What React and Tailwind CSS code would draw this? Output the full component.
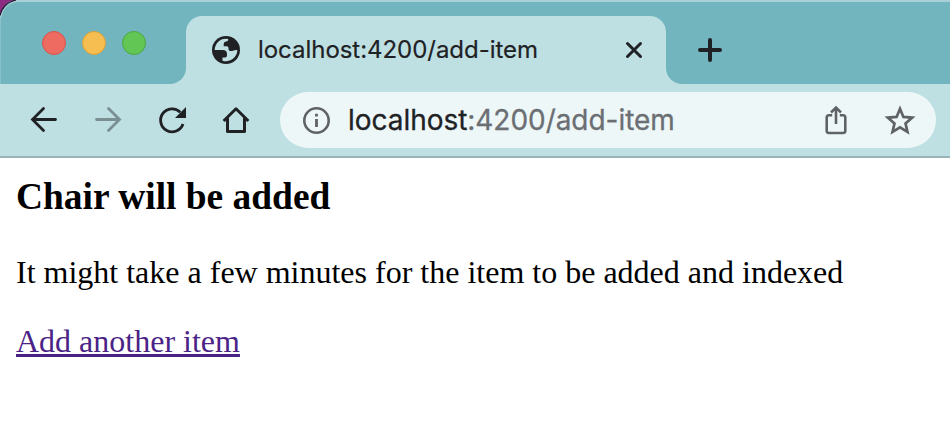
import React from "react";

function GlobeIcon() {
  return (
    <svg className="h-7 w-7 shrink-0" viewBox="0 0 28 28">
      <circle cx="14" cy="14" r="14" fill="#202124" />
      <path
        d="M2.700 14A11.300 11.300 0 0 1 16.200 2.900V4.200Q16 5.300 14 5.500 11.700 5.800 11.700 8v2.200h3q1.800 0 1.800 1.800v1.200q0 1.600 1.800 1.800 2 .2 3.200-.5 1.600-.8 3.800-.5A11.300 11.300 0 0 1 10.500 24.700V21.600h1.800q2.700 0 2.700-2.600v-1q0-4-4.200-4z"
        fill="#bfe0e2"
      />
    </svg>
  );
}

function TabStrip() {
  return (
    <div className="flex h-[84px] bg-[#bfe0e2]">
      <div className="flex h-[84px] w-[186px] items-center gap-4 rounded-br-2xl border-t-2 border-l border-t-[#a8d1d7] border-l-[#86c0c8] bg-[#72b5bf] pl-[41px]">
        <span className="h-6 w-6 rounded-full border border-[#d9534c] bg-[#ed6b60]" />
        <span className="h-6 w-6 rounded-full border border-[#d9a03c] bg-[#f6be50]" />
        <span className="h-6 w-6 rounded-full border border-[#4ca73d] bg-[#62c655]" />
      </div>
      <div className="h-[84px] w-[480px] border-t-2 border-[#a8d1d7] bg-[#72b5bf]">
        <div className="mt-3.5 flex h-[68px] items-center rounded-t-2xl bg-[#bfe0e2] pl-[26px] pr-[23px]">
          <GlobeIcon />
          <span className="ml-[18px] flex-1 whitespace-nowrap font-['Inter',sans-serif] text-[24px] leading-8 tracking-[-0.04px] text-[#202124] [-webkit-text-stroke:0.2px_#202124]">
            localhost:4200/add-item
          </span>
          <svg className="h-[18px] w-[18px]" viewBox="0 0 18 18" stroke="#202124" strokeWidth="3" strokeLinecap="round">
            <path d="M2.500 2.500l13 13M15.500 2.500l-13 13" />
          </svg>
        </div>
      </div>
      <div className="flex h-[84px] flex-1 items-center rounded-bl-2xl border-t-2 border-[#a8d1d7] bg-[#72b5bf] pl-8 pt-[14px]">
        <svg className="h-6 w-6" viewBox="0 0 24 24" stroke="#202124" strokeWidth="4" strokeLinecap="round">
          <path d="M12 2v20M2 12h20" />
        </svg>
      </div>
    </div>
  );
}

function Toolbar() {
  return (
    <div className="flex h-[74px] items-center border-b-2 border-[#9ab5b9] bg-[#bfe0e2] pl-7 pr-3.5">
      <div className="flex w-[252px] gap-8">
        <svg className="h-8 w-8" viewBox="0 0 32 32" fill="none" stroke="#202124" strokeWidth="2.8" strokeLinecap="round">
          <path d="M27.500 15.500H5M15.500 4.500l-11 11 11 11" />
        </svg>
        <svg className="h-8 w-8" viewBox="0 0 32 32" fill="none" stroke="#7b8f93" strokeWidth="2.8" strokeLinecap="round">
          <path d="M4.500 15.500H27M16.500 4.500l11 11-11 11" />
        </svg>
        <svg className="h-8 w-8" viewBox="0 0 32 32" fill="none">
          <path d="M24.300 8.200A11.500 11.500 0 1 0 27 20" stroke="#202124" strokeWidth="2.800" />
          <path d="M30 3v11H19z" fill="#202124" />
        </svg>
        <svg className="h-8 w-8" viewBox="0 0 32 32" fill="none" stroke="#202124" strokeWidth="3" strokeLinejoin="round">
          <path d="M3.600 17L16 4.800 28.400 17" />
          <path d="M7.500 14v13.500h17V14" />
        </svg>
      </div>
      <div className="flex h-14 flex-1 items-center rounded-full bg-[#eef7f8] pl-[23px] pr-5">
        <svg className="h-7 w-7 shrink-0" viewBox="0 0 28 28" fill="none">
          <circle cx="13.500" cy="14.500" r="12.200" stroke="#5f6368" strokeWidth="2.600" />
          <path d="M13.500 13v8M13.500 7.800v2.800" stroke="#5f6368" strokeWidth="2.800" />
        </svg>
        <span className="ml-[17px] flex-1 whitespace-nowrap font-['Inter',sans-serif] text-[28px] leading-9 tracking-[-0.04px] text-[#6b6f73] [-webkit-text-stroke:0.3px]">
          <span className="text-[#202124]">localhost</span>:4200/add-item
        </span>
        <svg className="h-8 w-8" viewBox="0 0 32 32" fill="none" stroke="#5f6368" strokeWidth="2.600">
          <path d="M12.200 11.300H9q-2.300 0-2.300 2.300v13.100q0 2.300 2.300 2.300h14q2.300 0 2.300-2.300V13.600q0-2.300-2.300-2.300h-3.200" />
          <path d="M16 20V3.500M11 8.500l5-5 5 5" />
        </svg>
        <svg className="ml-8 h-8 w-8" viewBox="0 0 32 32" fill="none" stroke="#5f6368" strokeWidth="2.700">
          <path d="M16 4.800l3.400 8.100 8.800.7-6.700 5.800 2 8.600-7.500-4.600L8.500 28l2-8.600-6.700-5.800 8.800-.7z" />
        </svg>
      </div>
    </div>
  );
}

export default function App() {
  return (
    <div className="h-[422px] w-[950px] overflow-hidden bg-white">
      <div className="relative">
        <TabStrip />
        <svg className="absolute left-0 top-0 h-5 w-5" viewBox="0 0 20 20" fill="none">
          <path d="M0 0H16Q4 1 0 15z" fill="#8c2b82" />
          <path d="M0 15.500Q3 3 16 0" stroke="#26102b" strokeWidth="1.200" />
          <path d="M.5 18Q3 4 18 .8" stroke="#a8d1d7" />
        </svg>
      </div>
      <Toolbar />
      <main className="px-4 font-['Liberation_Serif',serif] text-black">
        <h3 className="pt-[18px] text-[37.440px] font-bold leading-[42px]">Chair will be added</h3>
        <p className="mt-[36px] whitespace-nowrap text-[32px] leading-9">
          It might take a few minutes for the item to be added and indexed
        </p>
        <p className="mt-[33px] text-[32px] leading-9">
          <a className="text-[#4b2387] underline decoration-[3px] underline-offset-[2px] [text-decoration-skip-ink:none]">
            Add another item
          </a>
        </p>
      </main>
    </div>
  );
}
